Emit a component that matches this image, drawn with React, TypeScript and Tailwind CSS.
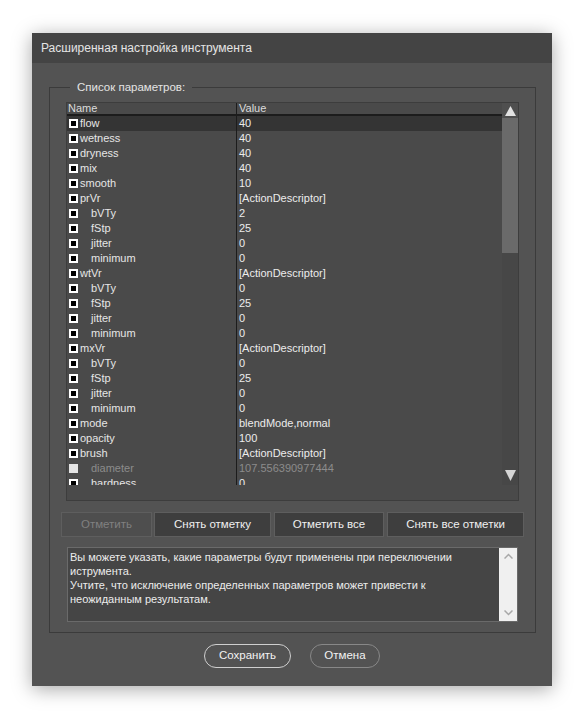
import React from "react";

type Param = { name: string; value: string; child?: boolean; off?: boolean };

const PARAMS: Param[] = [
  { name: "flow", value: "40" },
  { name: "wetness", value: "40" },
  { name: "dryness", value: "40" },
  { name: "mix", value: "40" },
  { name: "smooth", value: "10" },
  { name: "prVr", value: "[ActionDescriptor]" },
  { name: "bVTy", value: "2", child: true },
  { name: "fStp", value: "25", child: true },
  { name: "jitter", value: "0", child: true },
  { name: "minimum", value: "0", child: true },
  { name: "wtVr", value: "[ActionDescriptor]" },
  { name: "bVTy", value: "0", child: true },
  { name: "fStp", value: "25", child: true },
  { name: "jitter", value: "0", child: true },
  { name: "minimum", value: "0", child: true },
  { name: "mxVr", value: "[ActionDescriptor]" },
  { name: "bVTy", value: "0", child: true },
  { name: "fStp", value: "25", child: true },
  { name: "jitter", value: "0", child: true },
  { name: "minimum", value: "0", child: true },
  { name: "mode", value: "blendMode,normal" },
  { name: "opacity", value: "100" },
  { name: "brush", value: "[ActionDescriptor]" },
  { name: "diameter", value: "107.556390977444", child: true, off: true },
  { name: "hardness", value: "0", child: true },
];

/* small white box, black center when checked */
function Check({ off }: { off?: boolean }) {
  if (off) return <span className="block w-[9px] h-[9px] bg-[#e4e4e4] shrink-0" />;
  return (
    <span className="flex items-center justify-center w-[9px] h-[9px] bg-white shrink-0">
      <span className="block w-[5px] h-[5px] bg-black" />
    </span>
  );
}

function ParamRow({ p, selected }: { p: Param; selected: boolean }) {
  return (
    <div className={`flex h-[15px] items-center ${selected ? "bg-[#343434]" : ""}`}>
      <div className="flex items-center w-[170px] h-full pl-[2px] border-r border-[#1c1c1c]">
        <Check off={p.off} />
        <span
          className={`leading-[13px] mb-[1px] ${p.child ? "ml-[13px]" : "ml-[2px]"} ${
            p.off ? "text-[#8c8c8c]" : "text-[#e6e6e6]"
          }`}
        >
          {p.name}
        </span>
      </div>
      <span
        className={`pl-[2px] leading-[13px] mb-[1px] ${p.off ? "text-[#8c8c8c]" : "text-[#ececec]"}`}
      >
        {p.value}
      </span>
    </div>
  );
}

const btn =
  "h-[25px] border border-[#5e5e5e] text-[11.5px] flex items-center justify-center whitespace-nowrap";

export default function App() {
  return (
    <div className="min-h-[718px] bg-white pt-[33px] pl-[32px] font-['Liberation_Sans',Arial,sans-serif]">
      <div className="w-[520px] h-[653px] bg-[#535353] flex flex-col shadow-[0_3px_18px_rgba(0,0,0,0.35)]">
        {/* title bar */}
        <div className="h-[30px] bg-[#444444] flex items-center px-[9px] text-[12px] text-[#e4e4e4]">
          Расширенная настройка инструмента
        </div>

        <div className="flex-1 flex flex-col pt-[16px]">
          <fieldset className="mx-[17px] border border-[#3b3b3b] px-[11px] pb-[10px]">
            <legend className="ml-[9px] px-[7px] text-[11.5px] leading-[16px] text-[#e4e4e4]">
              Список параметров:
            </legend>

            {/* parameter list */}
            <div className="mx-[5px] mt-[7px] h-[399px] border border-[#3d3d3d] bg-[#4a4a4a] flex flex-col text-[11px]">
              <div className="flex h-[382px]">
                <div className="flex-1 flex flex-col overflow-hidden">
                  <div className="flex h-[13px] shrink-0 items-end border-b-2 border-[#1c1c1c] text-[#dcdcdc] leading-[11px]">
                    <div className="w-[170px] pl-[1px] border-r border-[#1c1c1c] h-full">Name</div>
                    <div className="pl-[2px]">Value</div>
                  </div>
                  <div className="h-[369px] overflow-hidden">
                    {PARAMS.map((p, i) => (
                      <ParamRow key={i} p={p} selected={i === 0} />
                    ))}
                  </div>
                </div>
                {/* vertical scrollbar */}
                <div className="w-[16px] flex flex-col bg-[#474747]">
                  <div className="h-[15px] bg-[#4f4f4f] flex items-center justify-center">
                    <svg width="11" height="10" viewBox="0 0 11 10">
                      <polygon points="5.5,0 11,10 0,10" fill="#e2e2e2" />
                    </svg>
                  </div>
                  <div className="h-[135px] bg-[#6a6a6a]" />
                  <div className="flex-1" />
                  <div className="h-[16px] flex items-start justify-center pt-[1px]">
                    <svg width="11" height="11" viewBox="0 0 11 11">
                      <polygon points="0,0 11,0 5.5,11" fill="#d6d6d6" />
                    </svg>
                  </div>
                </div>
              </div>
              <div className="flex-1" />
            </div>

            {/* action buttons */}
            <div className="flex gap-[2px] mt-[11px]">
              <div className={`${btn} w-[91px] bg-[#4e4e4e] text-[#808080]`}>Отметить</div>
              <div className={`${btn} w-[117px] bg-[#3e3e3e] text-[#f0f0f0]`}>Снять отметку</div>
              <div className={`${btn} w-[110px] bg-[#3e3e3e] text-[#f0f0f0] ml-[1px]`}>Отметить все</div>
              <div className={`${btn} w-[137px] bg-[#3e3e3e] text-[#f0f0f0] ml-[1px]`}>Снять все отметки</div>
            </div>

            {/* description */}
            <div className="mx-[6px] mt-[10px] h-[75px] border border-[#6a6a6a] bg-[#454545] flex">
              <div className="flex-1 pl-[2px] pt-[2px] text-[11px] leading-[14px] text-[#ececec] whitespace-nowrap overflow-hidden">
                Вы можете указать, какие параметры будут применены при переключении
                <br />
                иструмента.
                <br />
                Учтите, что исключение определенных параметров может привести к
                <br />
                неожиданным результатам.
              </div>
              <div className="w-[18px] bg-[#f0f0f0] flex flex-col items-center justify-between py-[5px]">
                <svg width="9" height="6" viewBox="0 0 9 6">
                  <polyline points="0.5,5.5 4.5,1.5 8.5,5.5" fill="none" stroke="#a8a8a8" strokeWidth="1.5" />
                </svg>
                <svg width="9" height="6" viewBox="0 0 9 6">
                  <polyline points="0.5,0.5 4.5,4.5 8.5,0.5" fill="none" stroke="#a8a8a8" strokeWidth="1.5" />
                </svg>
              </div>
            </div>
          </fieldset>

          {/* dialog buttons */}
          <div className="flex justify-center gap-[19px] mt-[11px]">
            <div className="w-[87px] h-[24px] rounded-full border border-[#cfcfcf] flex items-center justify-center text-[11.5px] text-[#f2f2f2]">
              Сохранить
            </div>
            <div className="w-[70px] h-[24px] rounded-full border border-[#888888] flex items-center justify-center text-[11.5px] text-[#f2f2f2]">
              Отмена
            </div>
          </div>
        </div>
      </div>
    </div>
  );
}
